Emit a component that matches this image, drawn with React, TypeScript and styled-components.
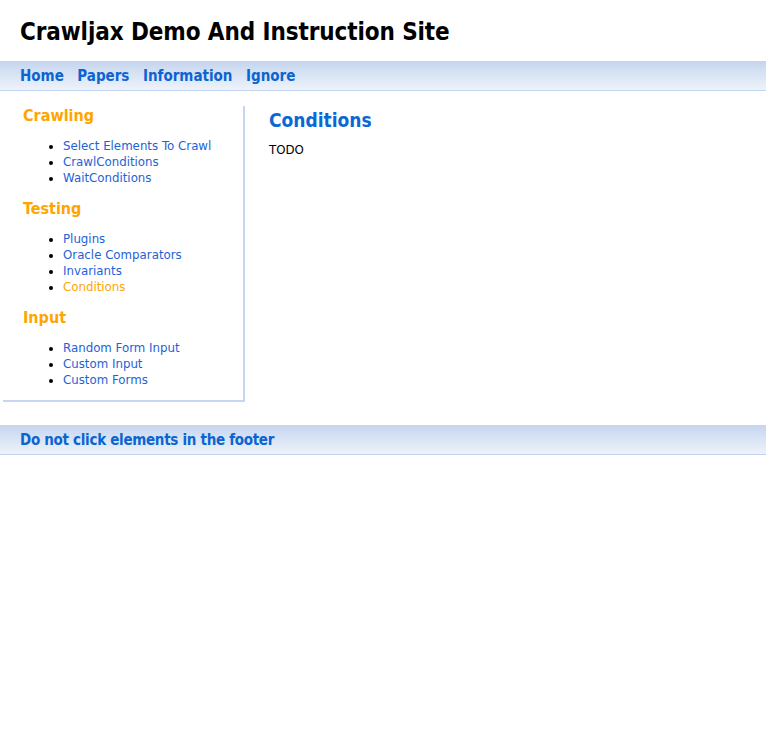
import React from "react";
import styled, { createGlobalStyle } from "styled-components";

const Global = createGlobalStyle`
  html, body { margin: 0; padding: 0; background: #fff; }
  body { font-family: "DejaVu Sans", sans-serif; font-size: 11.8px; color: #000; }
`;

const Page = styled.div`
  display: flex;
  flex-direction: column;
`;

const Header = styled.header`
  height: 61px;
  display: flex;
  align-items: center;
  padding-left: 20px;
`;

const Title = styled.h1`
  margin: 0;
  padding-top: 2px;
  font-family: "DejaVu Sans Condensed", "DejaVu Sans", sans-serif;
  font-size: 24px;
  font-weight: bold;
  color: #000;
  letter-spacing: -0.1px;
`;

const Bar = styled.div`
  display: flex;
  align-items: center;
  gap: 13.5px;
  padding-left: 20px;
  padding-top: 1px;
  box-sizing: border-box;
  height: 30px;
  background: linear-gradient(to bottom, #c5d5ee, #eef3fb);
  border-bottom: 1px solid #c3d3ee;
`;

const BarLink = styled.a<{ $tight?: boolean }>`
  font-family: "DejaVu Sans Condensed", "DejaVu Sans", sans-serif;
  color: #0a64d2;
  font-weight: bold;
  font-size: 15px;
  text-decoration: none;
  letter-spacing: ${(p) => (p.$tight ? "-0.3px" : "0px")};
`;

const Main = styled.div`
  display: flex;
  align-items: flex-start;
  margin-top: 15px;
  margin-bottom: 23px;
`;

const Sidebar = styled.nav`
  margin-left: 3px;
  border-right: 2px solid #c6d6f0;
  border-bottom: 2px solid #c6d6f0;
  padding: 0 0 12px 20px;
  box-sizing: border-box;
  width: 242px;
`;

const SideHeading = styled.h3`
  margin: 0;
  font-family: "DejaVu Sans Condensed", "DejaVu Sans", sans-serif;
  font-size: 16px;
  font-weight: bold;
  color: #ffa500;
  line-height: 20px;
`;

const List = styled.ul`
  margin: 12px 0 13px 0;
  padding-left: 40px;
  list-style: disc;
  line-height: 16px;
  &:last-child {
    margin-bottom: 0;
  }
`;

const Item = styled.li<{ $active?: boolean }>`
  color: #000;
  & a {
    color: ${(p) => (p.$active ? "#ffa500" : "#1e62d6")};
    text-decoration: none;
  }
`;

const Content = styled.section`
  padding-left: 24px;
`;

const ContentHeading = styled.h2`
  margin: 2px 0 10px 0;
  font-family: "DejaVu Sans Condensed", "DejaVu Sans", sans-serif;
  font-size: 19px;
  line-height: 24px;
  font-weight: bold;
  color: #0a68d6;
`;

const Text = styled.p`
  margin: 0;
  line-height: 16px;
`;

const sections = [
  { title: "Crawling", items: ["Select Elements To Crawl", "CrawlConditions", "WaitConditions"] },
  { title: "Testing", items: ["Plugins", "Oracle Comparators", "Invariants", "Conditions"] },
  { title: "Input", items: ["Random Form Input", "Custom Input", "Custom Forms"] },
];

export default function App() {
  return (
    <Page>
      <Global />
      <Header>
        <Title>Crawljax Demo And Instruction Site</Title>
      </Header>
      <Bar>
        <BarLink href="#">Home</BarLink>
        <BarLink href="#">Papers</BarLink>
        <BarLink href="#">Information</BarLink>
        <BarLink href="#">Ignore</BarLink>
      </Bar>
      <Main>
        <Sidebar>
          {sections.map((s) => (
            <React.Fragment key={s.title}>
              <SideHeading>{s.title}</SideHeading>
              <List>
                {s.items.map((i) => (
                  <Item key={i} $active={i === "Conditions"}>
                    <a href="#">{i}</a>
                  </Item>
                ))}
              </List>
            </React.Fragment>
          ))}
        </Sidebar>
        <Content>
          <ContentHeading>Conditions</ContentHeading>
          <Text>TODO</Text>
        </Content>
      </Main>
      <Bar>
        <BarLink href="#" $tight>Do not click elements in the footer</BarLink>
      </Bar>
    </Page>
  );
}
